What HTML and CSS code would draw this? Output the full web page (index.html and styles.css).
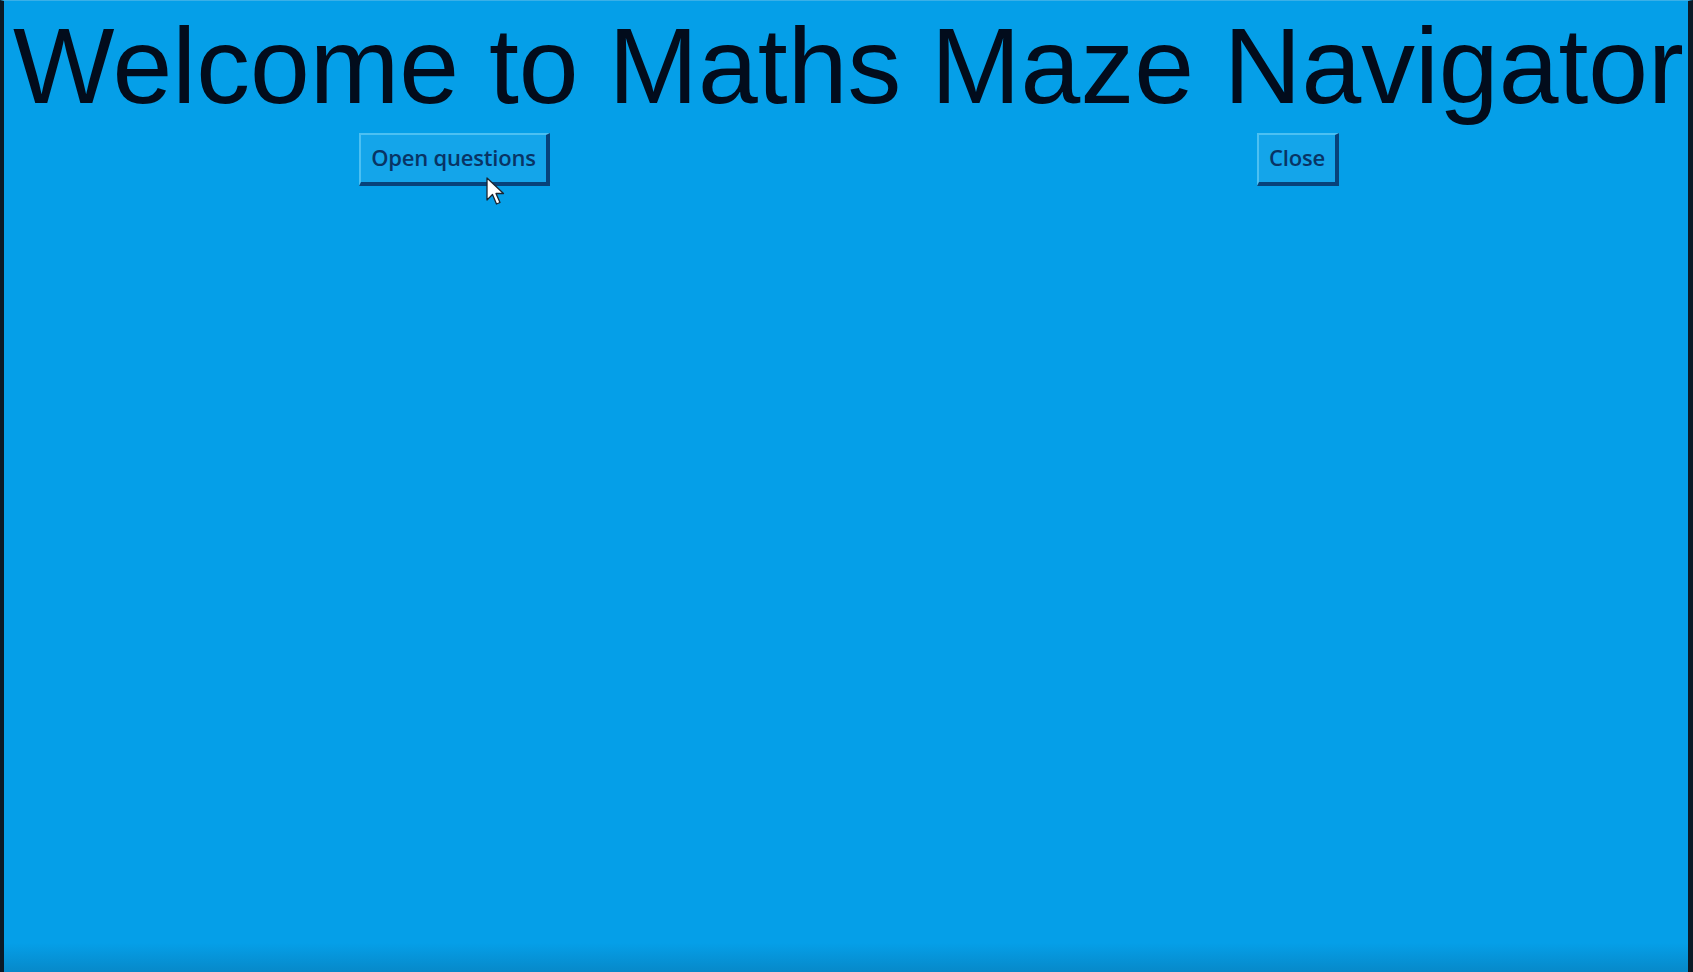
FILE: index.html
```html
<!DOCTYPE html>
<html>
<head>
<meta charset="utf-8">
<link rel="stylesheet" href="styles.css">
</head>
<body>
<div class="screen">
  <h1 class="title">Welcome to Maths Maze Navigator</h1>
  <div class="actions">
    <button class="btn btn-open">Open questions</button>
    <button class="btn btn-close">Close</button>
  </div>
  <svg class="cursor" width="22" height="30" viewBox="0 0 22 30">
    <path d="M1 1 L1 23 L6.5 17.5 L10.5 27 L14 25.5 L10 16.5 L17.5 16.5 Z" fill="#ffffff" stroke="#1a2430" stroke-width="1.3" stroke-linejoin="round"/>
  </svg>
</div>
</body>
</html>
```
FILE: styles.css
```css
html, body {
  margin: 0;
  padding: 0;
  height: 100%;
  background: #059fe8;
  overflow: hidden;
}
.screen {
  position: relative;
  height: 972px;
  box-sizing: border-box;
  background: linear-gradient(to bottom, #059fe8 0, #059fe8 942px, #0788c8 972px);
  border-left: 4px solid #0b1a26;
  border-right: 5px solid #0b1a26;
  border-top: 1px solid #3ab0e8;
}
.title {
  margin: 0;
  padding: 3px 0 0 9px;
  font-family: "Liberation Sans", Arial, sans-serif;
  font-weight: normal;
  font-size: 107.5px;
  line-height: 124px;
  color: #020c1c;
  white-space: nowrap;
}
.actions {
  display: flex;
  padding-left: 355px;
  margin-top: 5px;
}
.btn {
  box-sizing: border-box;
  height: 53px;
  padding: 0 6px 3px;
  font-family: "Open Sans", "Noto Sans", sans-serif;
  font-size: 22px;
  font-weight: 600;
  letter-spacing: -0.2px;
  color: #083465;
  background: #14a5ea;
  border-style: solid;
  border-width: 2px 4px 4px 2px;
  border-color: #4cc0f2 #07427a #07427a #4cc0f2;
  cursor: default;
}
.btn-open {
  width: 191px;
}
.btn-close {
  width: 82px;
  margin-left: 707px;
}
.cursor {
  position: absolute;
  left: 482px;
  top: 176px;
}
```
